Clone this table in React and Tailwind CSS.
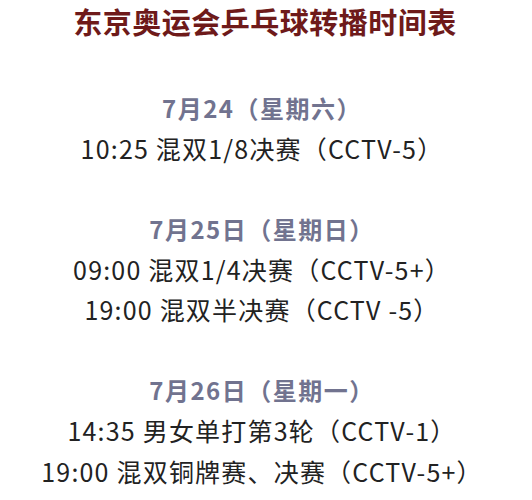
export default function App() {
  const font = { fontFamily: '"Noto Sans CJK SC", "Noto Sans", sans-serif' };
  const Date = ({ children }) => (
    <div className="h-[40.3px] leading-[40.3px] text-[24px] tracking-[1.5px] font-bold text-[#71738f]">{children}</div>
  );
  const Line = ({ children }) => (
    <div className="h-[40.3px] leading-[40.3px] text-[25px] tracking-[1.2px] text-[#222222] whitespace-nowrap">{children}</div>
  );
  return (
    <div className="w-[532px] h-[500px] bg-white flex flex-col items-center overflow-hidden" style={font}>
      <div className="w-full flex flex-col items-center pr-[8px]">
        <div className="h-[42px] leading-[42px] text-[29px] tracking-[0.5px] font-bold text-[#6e1a1a] pl-[6px]">东京奥运会乒乓球转播时间表</div>
        <div className="mt-[46px] flex flex-col items-center">
          <Date>7月24（星期六）</Date>
          <Line>10:25 混双1/8决赛（CCTV-5）</Line>
          <div className="h-[40.3px]" />
          <Date>7月25日（星期日）</Date>
          <Line>09:00 混双1/4决赛（CCTV-5+）</Line>
          <Line>19:00 混双半决赛（CCTV -5）</Line>
          <div className="h-[40.3px]" />
          <Date>7月26日（星期一）</Date>
          <Line>14:35 男女单打第3轮（CCTV-1）</Line>
          <Line>19:00 混双铜牌赛、决赛（CCTV-5+）</Line>
        </div>
      </div>
    </div>
  );
}
